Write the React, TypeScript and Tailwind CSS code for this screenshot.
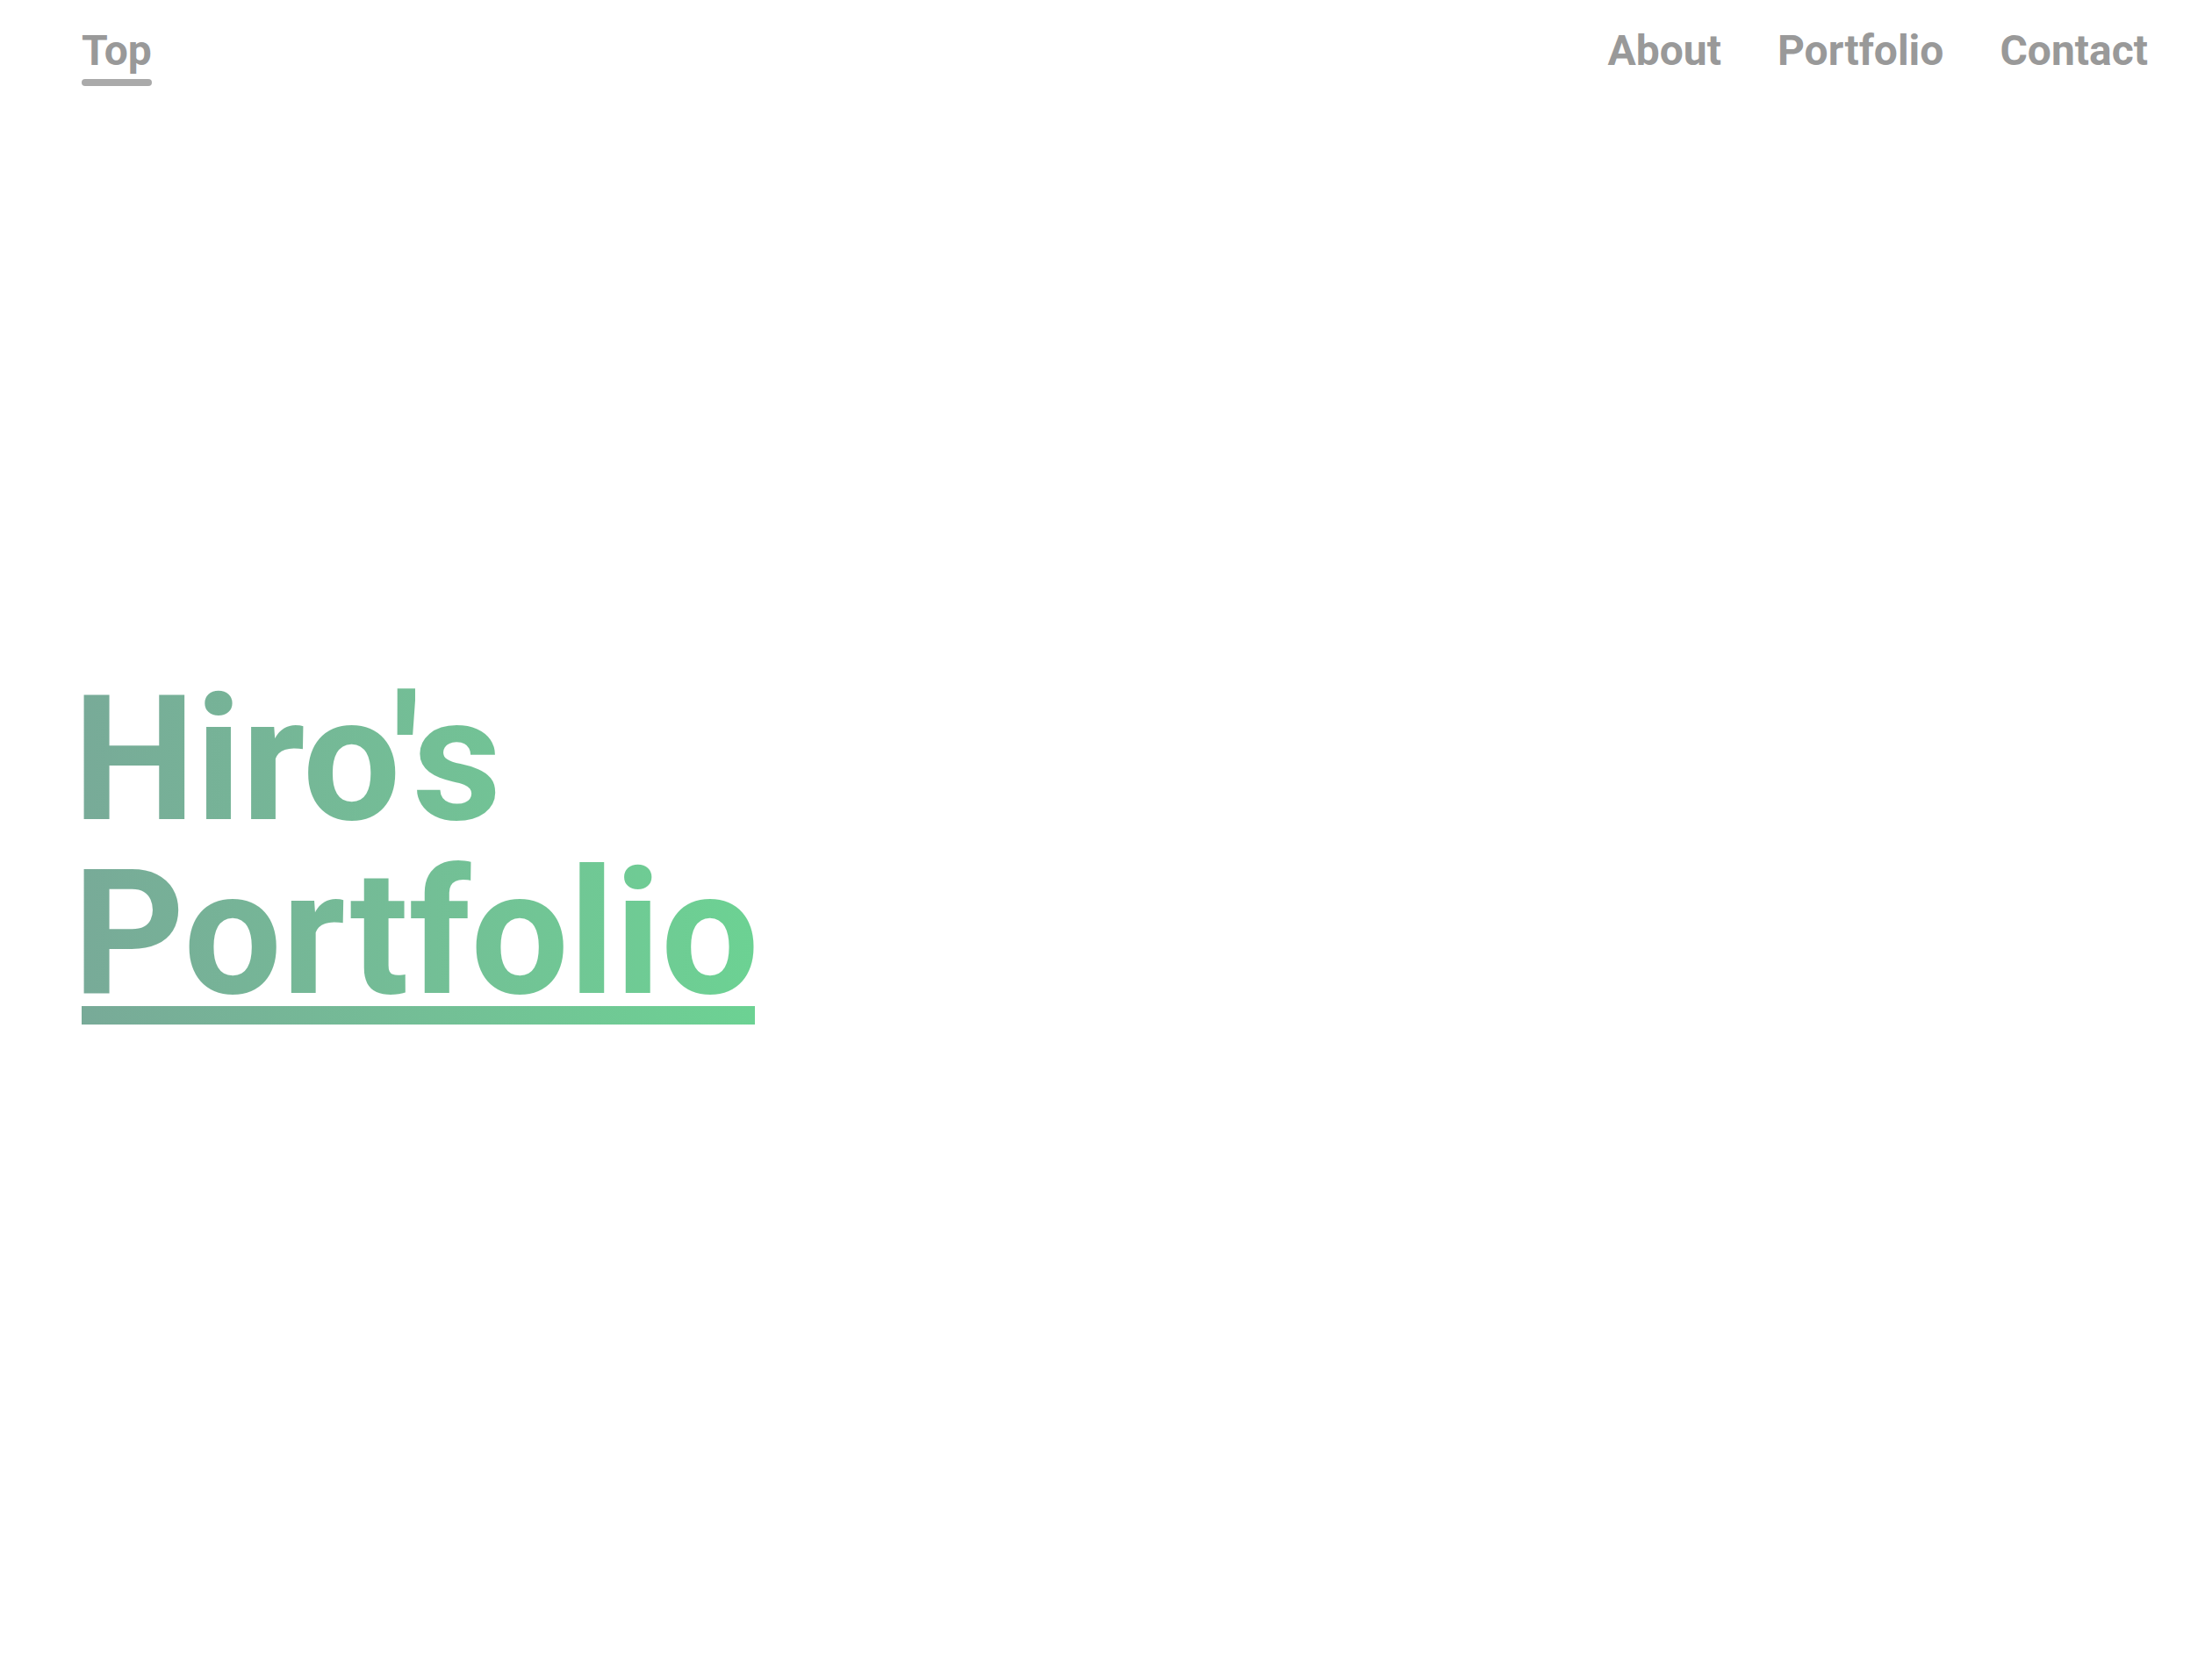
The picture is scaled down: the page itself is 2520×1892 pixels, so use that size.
import React from "react";

const links = ["About", "Portfolio", "Contact"];

export default function App() {
  return (
    <div className="min-h-screen bg-white font-['Roboto',sans-serif]">
      <header className="flex items-start justify-between pl-[93px] pr-[73px] pt-[34px]">
        <a href="#top" className="flex flex-col items-stretch gap-2 text-[48px] font-bold leading-none text-[#999999]">
          Top
          <span className="h-2 w-full rounded-full bg-[#aaaaaa]" />
        </a>
        <nav className="flex gap-[64px] text-[48px] font-bold leading-none text-[#999999]">
          {links.map((l) => (
            <a key={l} href={"#" + l.toLowerCase()}>
              {l}
            </a>
          ))}
        </nav>
      </header>
      <section className="pl-[83px] pt-[668px]">
        <h1 className="relative inline-block text-[198px] font-bold leading-none">
          <span className="block bg-gradient-to-r from-[#78aa98] to-[#6cd293] bg-clip-text text-transparent">
            Hiro's
            <br />
            Portfolio
          </span>
          <span className="absolute bottom-[-5px] left-[10px] right-[5px] h-[21px] bg-gradient-to-r from-[#78aa98] to-[#6cd293]" />
        </h1>
      </section>
    </div>
  );
}
